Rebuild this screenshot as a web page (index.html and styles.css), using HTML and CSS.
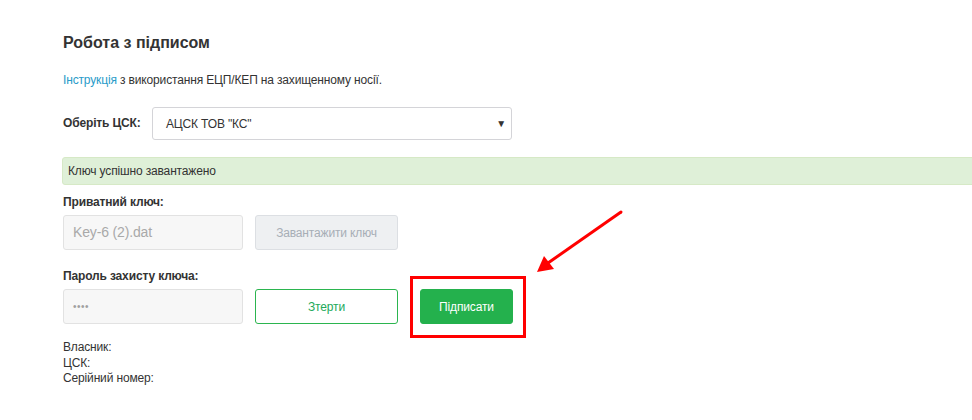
FILE: index.html
```html
<!DOCTYPE html>
<html lang="uk">
<head>
<meta charset="utf-8">
<title>Робота з підписом</title>
<link rel="stylesheet" href="styles.css">
</head>
<body>
<div class="page">
  <h1 class="title">Робота з підписом</h1>
  <p class="intro"><a class="link" href="#">Інструкція</a> з використання ЕЦП/КЕП на захищенному носії.</p>
  <div class="select-row">
    <label class="label">Оберіть ЦСК:</label>
    <div class="select">
      <span class="select-value">АЦСК ТОВ "КС"</span>
      <span class="caret">&#9660;</span>
    </div>
  </div>
  <div class="alert">Ключ успішно завантажено</div>
  <div class="field-label">Приватний ключ:</div>
  <div class="row">
    <div class="input">Key-6 (2).dat</div>
    <div class="btn btn-disabled">Завантажити ключ</div>
  </div>
  <div class="field-label second">Пароль захисту ключа:</div>
  <div class="row">
    <div class="input input-pass">••••</div>
    <div class="btn btn-outline">Зтерти</div>
    <div class="btn btn-primary">Підписати</div>
  </div>
  <div class="info">
    <div>Власник:</div>
    <div>ЦСК:</div>
    <div>Серійний номер:</div>
  </div>
</div>
<div class="highlight"></div>
<svg class="arrow" width="100" height="80" viewBox="0 0 100 80">
  <line x1="87" y1="5" x2="14" y2="56" stroke="#ff0000" stroke-width="3" stroke-linecap="round"/>
  <polygon points="3,65 10,49 20,62" fill="#ff0000"/>
</svg>
</body>
</html>
```
FILE: styles.css
```css
html, body {
  margin: 0;
  padding: 0;
  background: #ffffff;
}
body {
  font-family: "Liberation Sans", Arial, sans-serif;
  font-size: 12px;
  letter-spacing: -0.15px;
  color: #333333;
  position: relative;
  width: 972px;
  height: 420px;
  overflow: hidden;
}
.page {
  padding: 33px 0 0 63px;
}
.title {
  margin: 0;
  font-size: 16px;
  line-height: 20px;
  font-weight: bold;
  letter-spacing: 0;
  color: #333333;
}
.intro {
  margin: 19px 0 0;
  line-height: 16px;
}
.link {
  color: #2a9bc9;
  text-decoration: none;
}
.select-row {
  margin-top: 19px;
  display: flex;
  align-items: center;
}
.label {
  width: 89px;
  font-weight: bold;
  line-height: 16px;
  margin-top: -2px;
}
.select {
  box-sizing: border-box;
  width: 360px;
  height: 33px;
  border: 1px solid #d4d4d8;
  border-radius: 3px;
  display: flex;
  align-items: center;
  justify-content: space-between;
  padding: 0 5px 0 13px;
}
.select-value {
  color: #333333;
}
.caret {
  font-size: 10px;
  color: #333333;
}
.alert {
  box-sizing: border-box;
  margin: 17px -10px 0 -1px;
  height: 28px;
  background: #dff0d8;
  border: 1px solid #d6e9c6;
  border-radius: 3px;
  padding: 0 5px;
  line-height: 26px;
  color: #333333;
}
.field-label {
  margin-top: 9px;
  font-weight: bold;
  line-height: 16px;
}
.field-label.second {
  margin-top: 18px;
}
.row {
  margin-top: 5px;
  display: flex;
  align-items: center;
  gap: 12px;
}
.input {
  box-sizing: border-box;
  width: 180px;
  height: 35px;
  background: #f7f7f7;
  border: 1px solid #e2e2e2;
  border-radius: 3px;
  padding: 0 9px;
  line-height: 33px;
  font-size: 14px;
  color: #a9a9a9;
}
.input-pass {
  font-size: 10px;
  letter-spacing: 0.5px;
  color: #a0a0a0;
}
.btn {
  box-sizing: border-box;
  height: 35px;
  border-radius: 3px;
  display: flex;
  align-items: center;
  justify-content: center;
  font-size: 12px;
}
.btn-disabled {
  width: 143px;
  background: #eef0f2;
  border: 1px solid #dcdfe3;
  color: #a7aeb6;
}
.btn-outline {
  width: 143px;
  background: #ffffff;
  border: 1px solid #2bb54f;
  color: #22a95a;
}
.btn-primary {
  width: 93px;
  margin-left: 10px;
  background: #24b14d;
  border: 1px solid #24b14d;
  color: #ffffff;
}
.info {
  margin-top: 16px;
  line-height: 15.5px;
}
.highlight {
  position: absolute;
  left: 410px;
  top: 276px;
  width: 116px;
  height: 62px;
  box-sizing: border-box;
  border: 3px solid #ff0000;
}
.arrow {
  position: absolute;
  left: 534px;
  top: 207px;
}
```
